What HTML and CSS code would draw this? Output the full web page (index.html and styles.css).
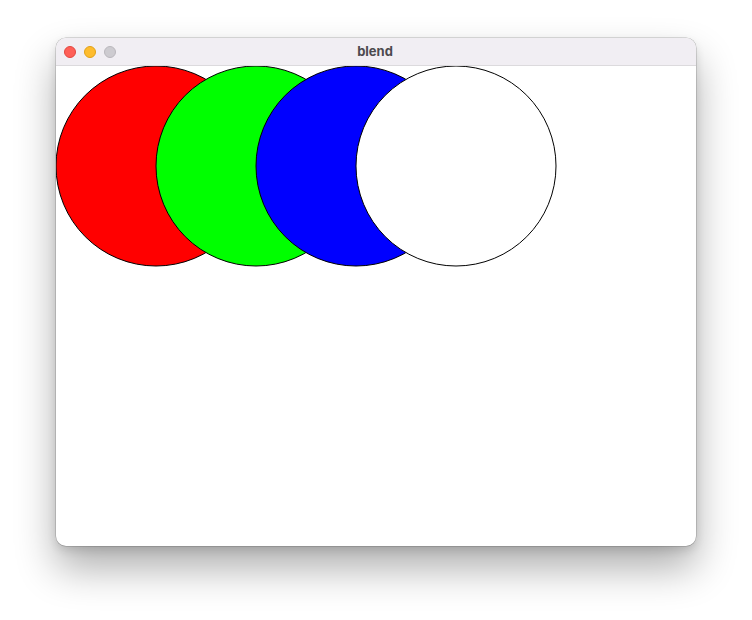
FILE: index.html
```html
<!DOCTYPE html>
<html>
<head>
<meta charset="utf-8">
<link rel="stylesheet" href="styles.css">
</head>
<body>
<div class="window">
  <div class="titlebar">
    <div class="lights">
      <span class="light red"></span>
      <span class="light yellow"></span>
      <span class="light grey"></span>
    </div>
    <div class="title">blend</div>
  </div>
  <div class="content">
    <svg class="canvas" width="640" height="480" viewBox="0 0 640 480">
      <circle cx="100" cy="100" r="100" fill="#ff0000" stroke="#000" stroke-width="1"/>
      <circle cx="200" cy="100" r="100" fill="#00ff00" stroke="#000" stroke-width="1"/>
      <circle cx="300" cy="100" r="100" fill="#0000ff" stroke="#000" stroke-width="1"/>
      <circle cx="400" cy="100" r="100" fill="#ffffff" stroke="#000" stroke-width="1"/>
    </svg>
  </div>
</div>
</body>
</html>
```
FILE: styles.css
```css
html, body {
  margin: 0;
  padding: 0;
  background: #ffffff;
}
body {
  width: 752px;
  height: 620px;
  overflow: hidden;
  padding: 38px 0 0 56px;
  box-sizing: border-box;
}
.window {
  width: 640px;
  height: 508px;
  border-radius: 10px;
  overflow: hidden;
  background: #ffffff;
  box-shadow: 0 0 0 0.5px rgba(0,0,0,0.25), 0 22px 40px rgba(0,0,0,0.32), 0 4px 10px rgba(0,0,0,0.12);
  display: flex;
  flex-direction: column;
}
.titlebar {
  height: 28px;
  flex: none;
  background: #f1eef3;
  border-bottom: 1px solid #dcdadd;
  box-sizing: border-box;
  display: flex;
  align-items: center;
  position: relative;
}
.lights {
  display: flex;
  gap: 8px;
  padding-left: 8px;
}
.light {
  width: 12px;
  height: 12px;
  border-radius: 50%;
  box-sizing: border-box;
}
.red { background: #fe5f57; border: 0.5px solid #e2463f; }
.yellow { background: #febc2e; border: 0.5px solid #e1a116; }
.grey { background: #cdcbd0; border: 0.5px solid #b9b7bc; }
.title {
  position: absolute;
  left: 0;
  right: 0;
  top: 0;
  bottom: 2px;
  display: flex;
  align-items: center;
  justify-content: center;
  font-family: "Inter", "Liberation Sans", sans-serif;
  font-weight: 700;
  font-size: 13px;
  color: #4c4a4f;
  padding-right: 2px;
}
.content {
  flex: 1;
  display: flex;
}
.canvas {
  display: block;
}
```
